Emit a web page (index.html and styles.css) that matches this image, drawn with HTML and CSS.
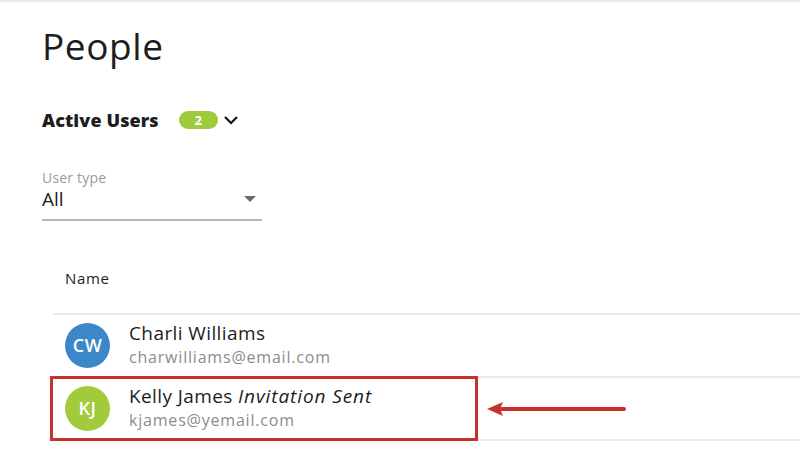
FILE: index.html
```html
<!DOCTYPE html>
<html lang="en">
<head>
    <meta charset="utf-8" />
    <title>People</title>
    <link rel="stylesheet" href="styles.css">
</head>
<body>
    <div class="page">
        <h1 class="title">People</h1>

        <div class="section-head">
            <span class="section-name">Active Users</span>
            <span class="badge">2</span>
            <svg class="chevron" width="16" height="10" viewBox="0 0 16 10">
                <path d="M2 2 L8 8 L14 2" fill="none" stroke="#111" stroke-width="2.2" />
            </svg>
        </div>

        <div class="select">
            <div class="select-label">User type</div>
            <div class="select-value">
                <span>All</span>
                <span class="caret"></span>
            </div>
        </div>

        <div class="table">
            <div class="table-head">Name</div>

            <div class="row">
                <div class="avatar blue">CW</div>
                <div class="person">
                    <div class="person-name">Charli Williams</div>
                    <div class="person-mail">charwilliams@email.com</div>
                </div>
            </div>

            <div class="row marked">
                <div class="avatar green">KJ</div>
                <div class="person">
                    <div class="person-name">Kelly James <em>Invitation Sent</em></div>
                    <div class="person-mail">kjames@yemail.com</div>
                </div>
                <div class="highlight"></div>
                <svg class="arrow" width="142" height="16" viewBox="0 0 142 16">
                    <path d="M137 8 L14 8" stroke="#c8322d" stroke-width="4" stroke-linecap="round" />
                    <path d="M0 8 L16 1 L13 8 L16 15 Z" fill="#c8322d" />
                </svg>
            </div>
        </div>
    </div>
</body>
</html>
```

FILE: styles.css
```css
body
{
	margin: 0;
	font-family: "Open Sans", "Liberation Sans", sans-serif;
	color: #1d1d1d;
	background-color: white;
	border-top: 2px solid #ebebeb;
}

.page
{
	padding: 0 0 0 42px;
}

.title
{
	margin: 0;
	padding-top: 18px;
	font-size: 37px;
	font-weight: 400;
	line-height: 52px;
	letter-spacing: 0.6px;
}

.section-head
{
	display: flex;
	align-items: center;
	margin-top: 36px;
	height: 24px;
}

.section-name
{
	font-size: 18px;
	font-weight: 800;
	letter-spacing: 0.1px;
}

.badge
{
	margin-left: 20px;
	width: 39px;
	height: 18px;
	border-radius: 9px;
	background-color: #9dcb3b;
	color: white;
	font-size: 13px;
	font-weight: 700;
	line-height: 18px;
	text-align: center;
}

.chevron
{
	margin-left: 5px;
}

.select
{
	margin-top: 38px;
	width: 220px;
	border-bottom: 2px solid #b4b4b4;
}

.select-label
{
	font-size: 14px;
	color: #9a9a9a;
	line-height: 16px;
	letter-spacing: 0.2px;
}

.select-value
{
	display: flex;
	justify-content: space-between;
	align-items: center;
	font-size: 19px;
	line-height: 26px;
	padding-bottom: 7px;
}

.caret
{
	margin-right: 6px;
	width: 0;
	height: 0;
	border-left: 6px solid transparent;
	border-right: 6px solid transparent;
	border-top: 6px solid #6b6b6b;
}

.table
{
	margin-left: 11px;
	margin-top: 40px;
}

.table-head
{
	padding-left: 12px;
	height: 54px;
	font-size: 15px;
	line-height: 34px;
	letter-spacing: 0.7px;
	border-bottom: 2px solid #ebebeb;
	box-sizing: border-box;
}

.row
{
	position: relative;
	display: flex;
	align-items: center;
	height: 63px;
	padding-left: 12px;
	border-bottom: 2px solid #ebebeb;
	box-sizing: border-box;
}

.avatar
{
	flex: none;
	width: 45px;
	height: 45px;
	border-radius: 50%;
	color: white;
	font-size: 18px;
	font-weight: 600;
	line-height: 45px;
	letter-spacing: 0.5px;
	text-align: center;
}

.blue
{
	background-color: #3c87c8;
}

.green
{
	background-color: #a2cb3c;
}

.person
{
	margin-left: 19px;
	margin-top: -3px;
}

.person-name
{
	font-size: 19px;
	line-height: 25px;
	letter-spacing: 0.4px;
}

.person-name em
{
	font-style: italic;
	letter-spacing: 0.9px;
}

.person-mail
{
	font-size: 16px;
	line-height: 22px;
	letter-spacing: 0.8px;
	color: #8c8c8c;
}

.highlight
{
	position: absolute;
	left: -3px;
	top: -2px;
	width: 428px;
	height: 65px;
	border: 3px solid #c8322d;
	box-sizing: border-box;
}

.arrow
{
	position: absolute;
	left: 434px;
	top: 23px;
}
```
